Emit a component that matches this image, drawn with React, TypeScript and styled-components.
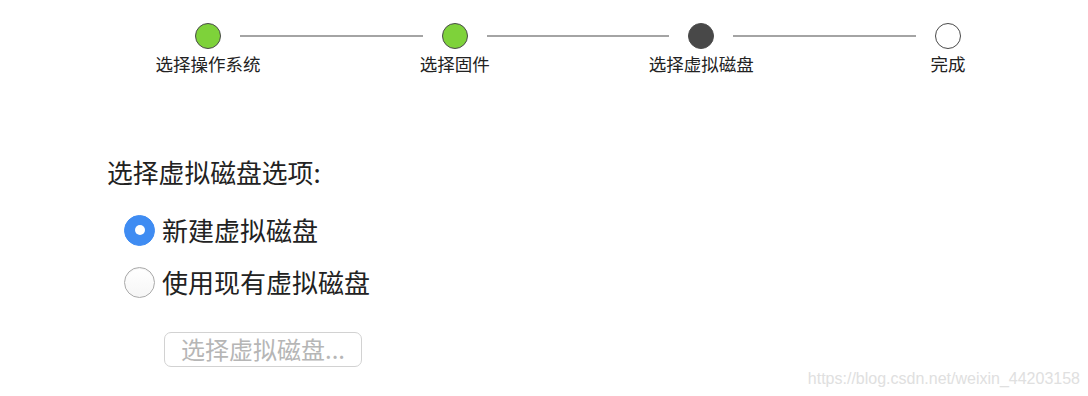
import React, { useState } from "react";
import styled, { createGlobalStyle } from "styled-components";

const GlobalStyle = createGlobalStyle`
  html, body {
    margin: 0;
    padding: 0;
    background: #ffffff;
  }
  body {
    font-family: "Noto Sans CJK SC", "Noto Sans", "Liberation Sans", sans-serif;
    color: #222222;
  }
`;

type StepState = "done" | "current" | "todo";

const steps: { label: string; state: StepState }[] = [
  { label: "选择操作系统", state: "done" },
  { label: "选择固件", state: "done" },
  { label: "选择虚拟磁盘", state: "current" },
  { label: "完成", state: "todo" },
];

const options = ["新建虚拟磁盘", "使用现有虚拟磁盘"];

const App = () => {
  const [selected, setSelected] = useState(0);

  return (
    <Page>
      <GlobalStyle />
      <Steps>
        {steps.map((step, index) => (
          <React.Fragment key={step.label}>
            <Dot state={step.state} style={{ gridColumn: index * 2 + 1 }} />
            {index < steps.length - 1 && (
              <Connector style={{ gridColumn: index * 2 + 2 }} />
            )}
          </React.Fragment>
        ))}
        {steps.map((step, index) => (
          <StepLabel key={step.label} style={{ gridColumn: index * 2 + 1 }}>
            {step.label}
          </StepLabel>
        ))}
      </Steps>

      <Heading>选择虚拟磁盘选项:</Heading>

      <OptionList>
        {options.map((option, index) => (
          <OptionRow key={option} onClick={() => setSelected(index)}>
            <Radio checked={selected === index} />
            <OptionText>{option}</OptionText>
          </OptionRow>
        ))}
      </OptionList>

      <PickButton disabled={selected === 0}>选择虚拟磁盘...</PickButton>

      <Watermark>https://blog.csdn.net/weixin_44203158</Watermark>
    </Page>
  );
};

const Page = styled.div`
  position: relative;
  width: 1088px;
  height: 396px;
  padding-top: 23px;
  box-sizing: border-box;
  overflow: hidden;
`;

const Steps = styled.div`
  display: grid;
  grid-template-columns: 26px 1fr 26px 1fr 26px 1fr 26px;
  grid-template-rows: 26px auto;
  row-gap: 4px;
  align-items: center;
  width: 766px;
  margin-left: 195px;
`;

const dotColors: Record<StepState, string> = {
  done: "#7ed23a",
  current: "#484848",
  todo: "#ffffff",
};

const Dot = styled.div<{ state: StepState }>`
  grid-row: 1;
  width: 26px;
  height: 26px;
  box-sizing: border-box;
  border-radius: 50%;
  border: 1px solid #4a4a4a;
  background: ${({ state }) => dotColors[state]};
`;

const Connector = styled.div`
  grid-row: 1;
  height: 2px;
  margin: 0 19px;
  background: #a4a4a4;
`;

const StepLabel = styled.div`
  grid-row: 2;
  justify-self: center;
  width: max-content;
  font-size: 17.5px;
  line-height: 22px;
  color: #222222;
  white-space: nowrap;
`;

const Heading = styled.div`
  margin: 81px 0 0 107px;
  font-size: 25.8px;
  line-height: 32px;
  color: #222222;
`;

const OptionList = styled.div`
  display: flex;
  flex-direction: column;
  margin: 16px 0 0 124px;
`;

const OptionRow = styled.label`
  display: flex;
  align-items: center;
  gap: 7px;
  height: 52px;
  cursor: pointer;
`;

const Radio = styled.span<{ checked: boolean }>`
  display: flex;
  align-items: center;
  justify-content: center;
  width: 31px;
  height: 31px;
  box-sizing: border-box;
  border-radius: 50%;
  border: 1px solid ${({ checked }) => (checked ? "#3f8cf2" : "#aaaaaa")};
  background: ${({ checked }) =>
    checked ? "#3f8cf2" : "linear-gradient(#ffffff, #f6f6f6)"};
  box-shadow: ${({ checked }) =>
    checked ? "none" : "inset 0 1px 1px rgba(0, 0, 0, 0.06)"};

  &::after {
    content: "";
    display: ${({ checked }) => (checked ? "block" : "none")};
    width: 10px;
    height: 10px;
    border-radius: 50%;
    background: #ffffff;
  }
`;

const OptionText = styled.span`
  font-size: 26px;
  line-height: 34px;
  color: #222222;
`;

const PickButton = styled.button`
  display: flex;
  align-items: center;
  justify-content: center;
  width: 198px;
  height: 35px;
  margin: 24px 0 0 164px;
  padding: 0 0 2px;
  box-sizing: border-box;
  border: 1.5px solid #d2d2d2;
  border-radius: 7px;
  background: #ffffff;
  font-family: "Noto Sans CJK SC", "Liberation Sans", sans-serif;
  font-size: 24px;
  line-height: 30px;
  color: #b6b6b6;
`;

const Watermark = styled.div`
  position: absolute;
  right: 8px;
  bottom: 8px;
  font-family: "Liberation Sans", sans-serif;
  font-size: 16px;
  line-height: 18px;
  color: #e0e0e0;
`;

export default App;
